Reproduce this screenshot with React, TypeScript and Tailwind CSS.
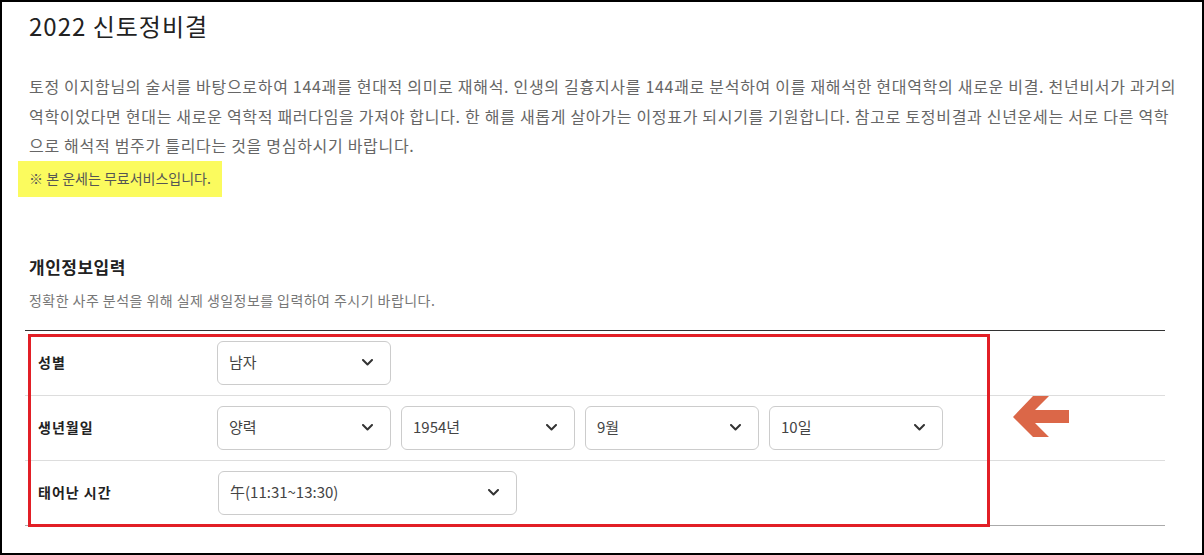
import React from "react";

function Chevron() {
  return (
    <svg width="11" height="7" viewBox="0 0 11 7" className="shrink-0">
      <polyline points="1,1 5.5,5.5 10,1" fill="none" stroke="#333" strokeWidth="2" strokeLinecap="round" strokeLinejoin="round" />
    </svg>
  );
}

function Select({ value, w }: { value: string; w: string }) {
  return (
    <div className={`${w} h-[44px] border border-[#cccccc] rounded-[6px] bg-white flex items-center justify-between pl-[11px] pr-[17px]`}>
      <span className="text-[15px] text-[#444]">{value}</span>
      <Chevron />
    </div>
  );
}

function Row({ label, children, last }: { label: string; children: React.ReactNode; last?: boolean }) {
  return (
    <div className={`flex items-center h-[65px] ${last ? "border-b border-[#aaaaaa]" : "border-b border-[#dddddd]"}`}>
      <div className="w-[192px] pl-[13px] text-[14px] tracking-[1px] font-bold text-[#222]">{label}</div>
      <div className="flex items-center gap-[10px]">{children}</div>
    </div>
  );
}

export default function App() {
  return (
    <div
      className="relative w-[1204px] h-[555px] border-2 border-black bg-white overflow-hidden"
      style={{ fontFamily: '"Noto Sans CJK KR", "Noto Sans", sans-serif' }}
    >
      <div className="pl-[23px] pt-[12px] w-[1163px]">
        <h1 className="ml-[4px] text-[24px] leading-[24px] tracking-[1px] text-[#222] font-normal">2022 신토정비결</h1>
        <p className="ml-[4px] mt-[34px] w-[1160px] text-[16px] leading-[29.5px] text-[#666] tracking-[0.7px]">
          토정 이지함님의 술서를 바탕으로하여 144괘를 현대적 의미로 재해석. 인생의 길흉지사를 144괘로 분석하여 이를 재해석한 현대역학의 새로운 비결. 천년비서가 과거의
          <br />
          역학이었다면 현대는 새로운 역학적 패러다임을 가져야 합니다. 한 해를 새롭게 살아가는 이정표가 되시기를 기원합니다. 참고로 토정비결과 신년운세는 서로 다른 역학
          <br />
          으로 해석적 범주가 틀리다는 것을 명심하시기 바랍니다.
        </p>
        <div className="ml-[-7px] inline-flex items-center h-[36px] px-[11px] bg-[#fbfb5e] text-[14px] text-[#555]">
          ※ 본 운세는 무료서비스입니다.
        </div>
        <h2 className="ml-[4px] mt-[58px] text-[17px] leading-[24px] tracking-[0.5px] font-bold text-[#222]">개인정보입력</h2>
        <p className="ml-[4px] mt-[11px] text-[14px] leading-[20px] tracking-[0.45px] text-[#777]">정확한 사주 분석을 위해 실제 생일정보를 입력하여 주시기 바랍니다.</p>
        <div className="mt-[20px] w-[1140px] border-t border-[#333]">
          <Row label="성별">
            <Select value="남자" w="w-[174px]" />
          </Row>
          <Row label="생년월일">
            <Select value="양력" w="w-[174px]" />
            <Select value="1954년" w="w-[174px]" />
            <Select value="9월" w="w-[174px]" />
            <Select value="10일" w="w-[174px]" />
          </Row>
          <Row label="태어난 시간" last>
            <div className="ml-[1px]">
              <Select value="午(11:31~13:30)" w="w-[299px]" />
            </div>
          </Row>
        </div>
      </div>
      <div className="absolute left-[26px] top-[332px] w-[962px] h-[193px] border-[3px] border-[#e21f26]" />
      <svg className="absolute left-[1009px] top-[392px]" width="60" height="46" viewBox="0 0 60 46">
        <polygon points="2,23 22,2 38,2 24,16 58,16 58,29 24,29 38,43 22,43" fill="#db6748" />
      </svg>
    </div>
  );
}
